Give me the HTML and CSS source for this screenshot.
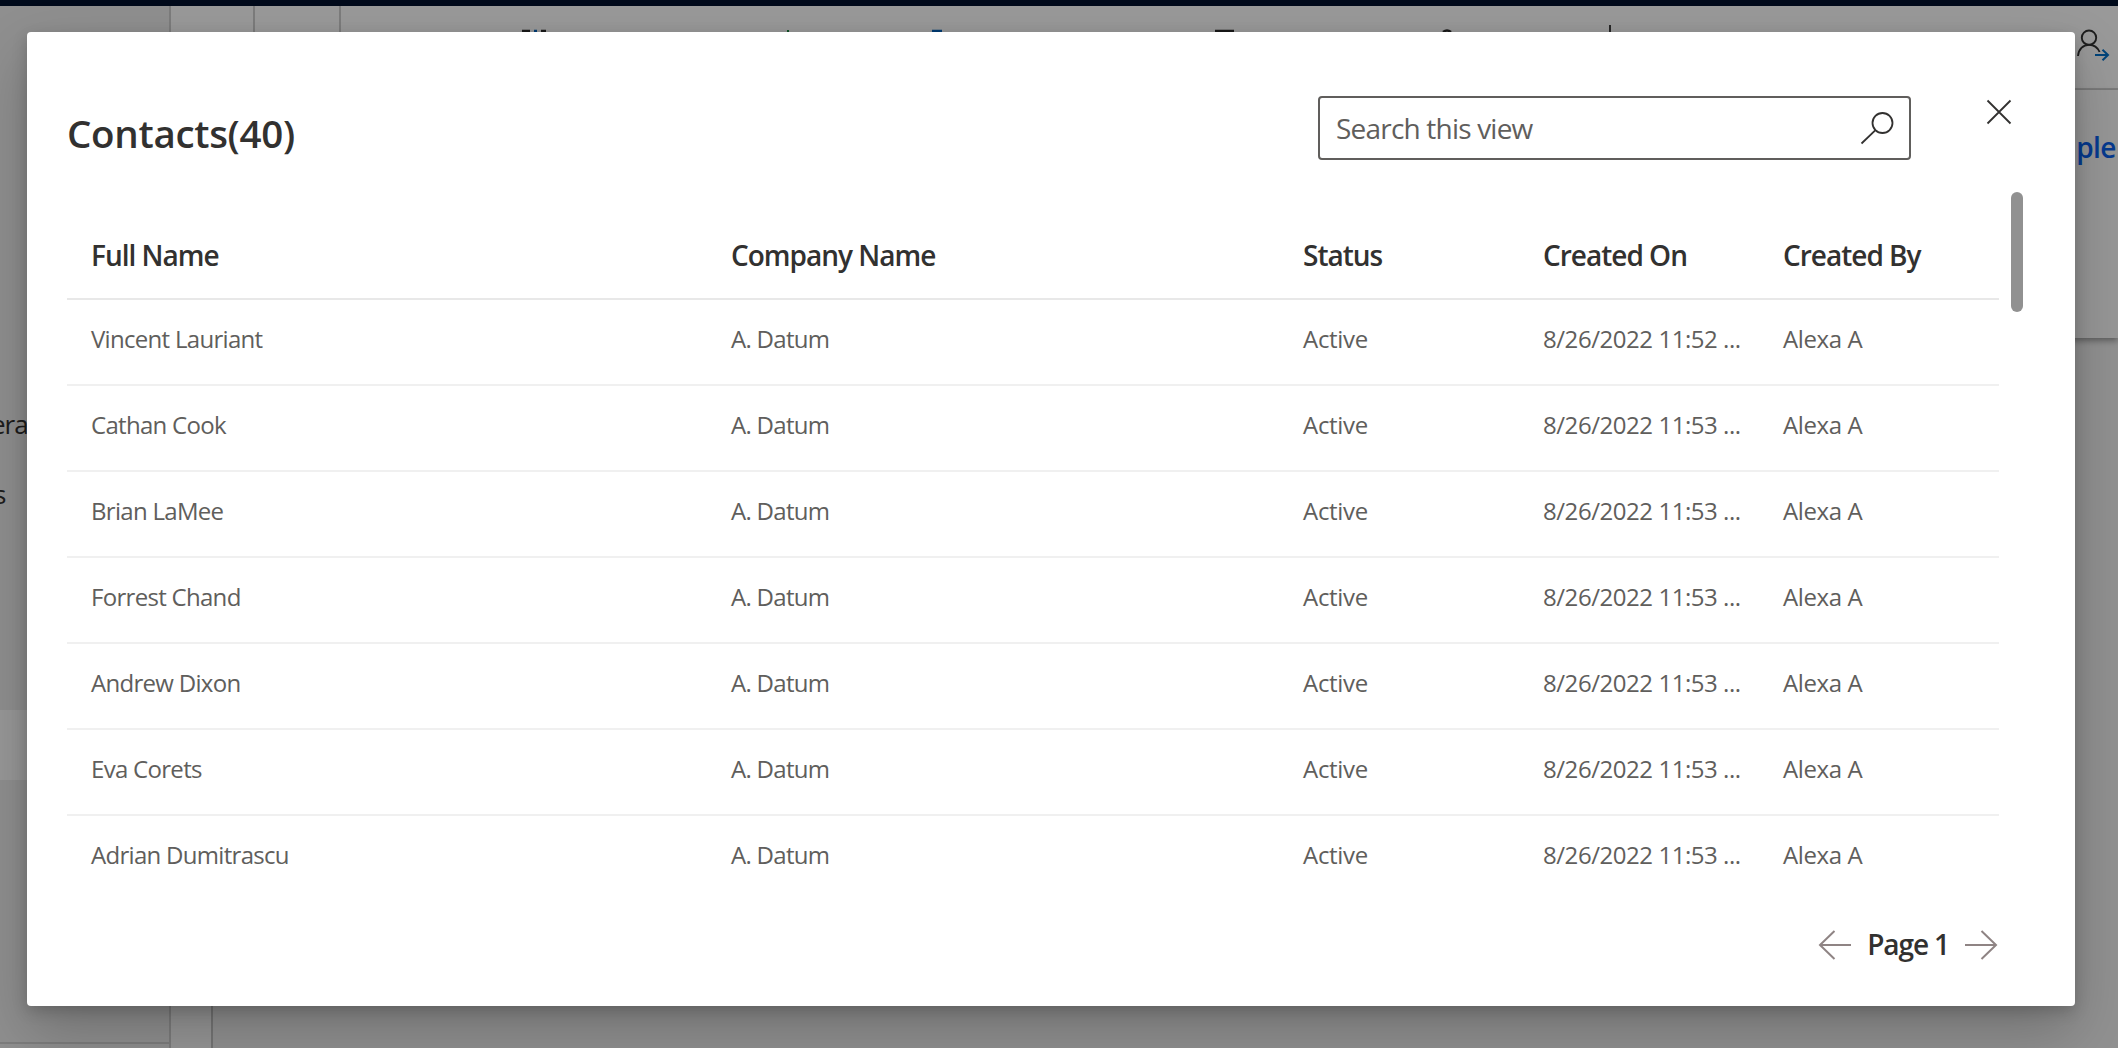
FILE: index.html
```html
<!DOCTYPE html>
<html lang="en">
<head>
<meta charset="utf-8">
<title>Contacts</title>
<link rel="stylesheet" href="styles.css">
</head>
<body>
<div class="app">
  <header class="app-bar"></header>
  <div class="app-body">
    <nav class="sidebar">
      <div class="nav-item">era</div>
      <div class="nav-item nav-second">s</div>
      <div class="nav-selected"></div>
      <div class="nav-footer"></div>
    </nav>
    <main class="content">
      <div class="toolbar">
        <div class="tool-cell"></div>
        <div class="tool-cell"></div>
        <svg class="tool-icons" width="1778" height="82" viewBox="340 6 1778 82" fill="none">
          <path d="M522 31h8M541 31h5M1215 31h19M1443 32q4-3 8 0" stroke="#2b2b2b" stroke-width="2.4"/>
          <path d="M534 31h3M932 31h10" stroke="#0065c0" stroke-width="2.4"/>
          <path d="M788 30v3" stroke="#1c8a44" stroke-width="2"/>
          <path d="M1610 25v30" stroke="#444" stroke-width="2"/>
          <circle cx="2089" cy="37.7" r="7.2" stroke="#333" stroke-width="1.9"/>
          <path d="M2078 56c.5-6.500 5-11.300 11-11.300 4.300 0 8.500 2.400 10.600 7.300" stroke="#333" stroke-width="1.9"/>
          <path d="M2095 55h13M2102.500 49.800l5.500 5.200-5.500 5.200" stroke="#0072cc" stroke-width="2"/>
        </svg>
      </div>
      <div class="work">
        <div class="gutter"></div>
        <div class="form">
          <div class="record"><span>ple</span></div>
        </div>
      </div>
    </main>
  </div>
</div>
<div class="overlay">
  <section class="dialog" role="dialog" aria-label="Contacts">
    <div class="dialog-head">
      <h1 class="title">Contacts(40)</h1>
      <div class="search">
        <span class="search-text">Search this view</span>
        <svg width="34" height="34" viewBox="0 0 34 34" fill="none" stroke="#323130" stroke-width="1.8"><circle cx="22.500" cy="12" r="10"/><path d="M15.200 19.300L1.500 32.500"/></svg>
      </div>
      <svg class="close" width="26" height="26" viewBox="0 0 26 26" fill="none" stroke="#323130" stroke-width="1.8"><path d="M1.500 1.500l23 23M24.500 1.500l-23 23"/></svg>
    </div>
    <div class="grid-wrap">
      <div class="grid">
        <div class="row head"><span>Full Name</span><span>Company Name</span><span>Status</span><span>Created On</span><span>Created By</span></div>
        <div class="row"><span>Vincent Lauriant</span><span>A. Datum</span><span>Active</span><span>8/26/2022 11:52 ...</span><span>Alexa A</span></div>
        <div class="row"><span>Cathan Cook</span><span>A. Datum</span><span>Active</span><span>8/26/2022 11:53 ...</span><span>Alexa A</span></div>
        <div class="row"><span>Brian LaMee</span><span>A. Datum</span><span>Active</span><span>8/26/2022 11:53 ...</span><span>Alexa A</span></div>
        <div class="row"><span>Forrest Chand</span><span>A. Datum</span><span>Active</span><span>8/26/2022 11:53 ...</span><span>Alexa A</span></div>
        <div class="row"><span>Andrew Dixon</span><span>A. Datum</span><span>Active</span><span>8/26/2022 11:53 ...</span><span>Alexa A</span></div>
        <div class="row"><span>Eva Corets</span><span>A. Datum</span><span>Active</span><span>8/26/2022 11:53 ...</span><span>Alexa A</span></div>
        <div class="row"><span>Adrian Dumitrascu</span><span>A. Datum</span><span>Active</span><span>8/26/2022 11:53 ...</span><span>Alexa A</span></div>
      </div>
      <div class="scroll-thumb"></div>
    </div>
    <div class="pager">
      <svg width="34" height="30" viewBox="0 0 34 30" fill="none" stroke="#8f8484" stroke-width="2"><path d="M33 15H2M16.500 1L2 15l14.500 14"/></svg>
      <span class="page-label">Page 1</span>
      <svg width="34" height="30" viewBox="0 0 34 30" fill="none" stroke="#8f8484" stroke-width="2"><path d="M1 15h31M17.500 1L32 15 17.500 29"/></svg>
    </div>
  </section>
</div>
</body>
</html>
```
FILE: styles.css
```css
* { box-sizing: border-box; }
body {
  margin: 0;
  width: 2118px;
  height: 1048px;
  overflow: hidden;
  position: relative;
  font-family: "Open Sans", "Noto Sans", sans-serif;
  color: #323130;
}
.app { height: 1048px; display: flex; flex-direction: column; background: #fff; }
.app-bar { height: 6px; background: #00122e; flex: none; }
.app-body { flex: 1; display: flex; }
.sidebar {
  width: 171px;
  flex: none;
  background: #efefef;
  border-right: 2px solid #cfcfcf;
  padding-top: 383px;
  overflow: hidden;
}
.nav-item { height: 70px; line-height: 70px; font-size: 26px; letter-spacing: -1px; margin-left: -9px; }
.nav-second { margin-left: -6px; }
.nav-selected { height: 70px; margin-top: 181px; background: #fdfdfd; }
.nav-footer { margin-top: 262px; border-top: 2px solid #d0d0d0; }
.content { flex: 1; min-width: 0; display: flex; flex-direction: column; }
.toolbar { height: 84px; display: flex; border-bottom: 2px solid #d2d2d2; overflow: hidden; }
.tool-cell { width: 84px; flex: none; border-right: 2px solid #cfcfcf; }
.tool-cell + .tool-cell { width: 86px; }
.tool-icons { flex: none; margin-left: -1px; }
.work { flex: 1; display: flex; }
.gutter { width: 42px; border-right: 2px solid #c4c4c4; background: #fafafa; }
.form { flex: 1; background: #f2f2f2; }
.record {
  height: 248px;
  background: #fcfcfc;
  box-shadow: 0 3px 6px rgba(0, 0, 0, .35);
  display: flex;
  justify-content: flex-end;
  padding: 37px 2px 0 0;
  font-size: 28px;
  line-height: 40px;
  font-weight: 600;
  letter-spacing: -.5px;
  color: #0b62ef;
}
.overlay {
  position: absolute;
  inset: 0;
  background: rgba(0, 0, 0, .4);
  padding: 32px 43px 42px 27px;
}
.dialog {
  height: 974px;
  background: #fff;
  border-radius: 4px;
  box-shadow: 0 26px 58px rgba(0, 0, 0, .22), 0 5px 15px rgba(0, 0, 0, .18);
  display: flex;
  flex-direction: column;
}
.dialog-head { display: flex; padding: 64px 63px 0 40px; height: 160px; }
.title { margin: 8px 0 0; font-size: 38.5px; line-height: 58px; font-weight: 600; letter-spacing: -.3px; }
.search {
  margin-left: auto;
  width: 593px;
  height: 64px;
  border: 2px solid #605e5c;
  border-radius: 4px;
  display: flex;
  align-items: center;
  justify-content: space-between;
  padding: 0 15px 0 16px;
  font-size: 28px;
  color: #605e5c;
  letter-spacing: -.8px;
}
.close { margin: 3px 0 0 75px; }
.grid-wrap { display: flex; height: 698px; overflow: hidden; padding-left: 40px; }
.grid { width: 1932px; padding-top: 20px; }
.row {
  display: grid;
  grid-template-columns: 640px 572px 240px 240px 240px;
  height: 86px;
  align-items: center;
  padding-bottom: 7px;
  border-bottom: 2px solid #f0f0f0;
  font-size: 24px;
  letter-spacing: -.7px;
  color: #605e5c;
  white-space: nowrap;
}
.row > span { padding-left: 24px; }
.row > span:nth-child(3) { letter-spacing: -.3px; }
.row > span:nth-child(4) { letter-spacing: -.45px; }
.row > span:nth-child(5) { letter-spacing: -.4px; }
.row:last-child { border-bottom: 0; padding-bottom: 9px; }
.row.head { height: 88px; padding-bottom: 0; border-bottom-color: #e8e8e8; font-size: 28px; font-weight: 600; color: #323130; }
.row.head > span { letter-spacing: -1px; }
.scroll-thumb { width: 12px; height: 120px; margin-left: 12px; border-radius: 6px; background: #919191; }
.pager { display: flex; align-items: center; justify-content: flex-end; padding: 0 77px 0 0; height: 110px; }
.page-label { font-size: 28px; font-weight: 600; letter-spacing: -1.100px; margin: -3px 15px 0; }
```
